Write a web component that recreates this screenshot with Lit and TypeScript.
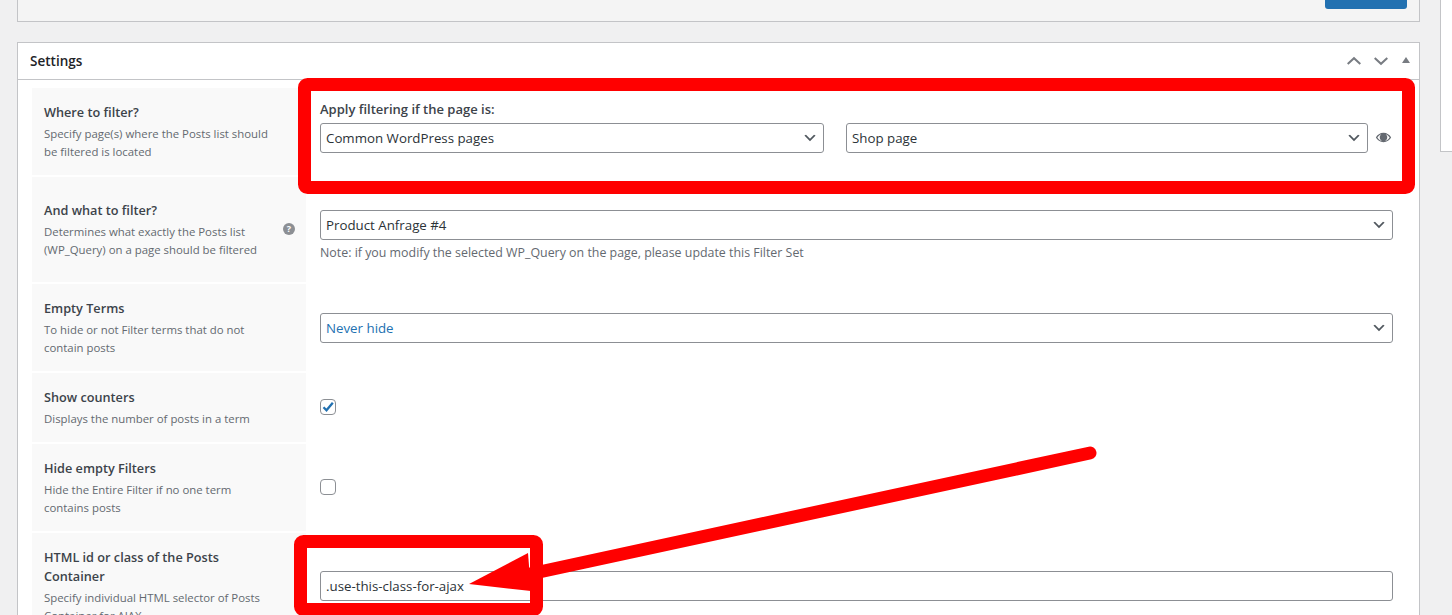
import { LitElement, html, css, svg } from "lit";
import { customElement } from "lit/decorators.js";

const chevron = html`<svg class="chev" viewBox="0 0 20 20" width="16" height="16"><path d="M5 6l5 5 5-5 2 1-7 7-7-7 2-1z" fill="#50575e"/></svg>`;

@customElement("app-root")
export class AppRoot extends LitElement {
  static styles = css`
    :host { display: block; position: relative; width: 1452px; height: 615px; overflow: hidden; background: #f0f0f1; font-family: "Open Sans", "Noto Sans", sans-serif; color: #3c434a; font-size: 13px; }
    * { box-sizing: border-box; }
    .page { display: flex; align-items: flex-start; padding-left: 17px; }
    .main { width: 1403px; flex: none; display: flex; flex-direction: column; gap: 20px; }
    .side { margin-left: 20px; width: 40px; height: 152px; background: #fff; border: 1px solid #c3c4c7; border-top: 0; border-right: 0; flex: none; }
    .top { height: 22px; background: #f4f4f4; border: 1px solid #c3c4c7; border-top: 0; display: flex; justify-content: flex-end; padding-right: 12px; }
    .publish { width: 82px; height: 9px; background: #2271b1; border-radius: 0 0 3px 3px; }
    .panel { background: #fff; border: 1px solid #c3c4c7; border-bottom: 0; }
    .head { height: 37px; border-bottom: 1px solid #c3c4c7; display: flex; align-items: center; padding: 0 8px 0 12px; }
    .head h2 { margin: 0; flex: 1; font-size: 13.500px; font-weight: 600; color: #1d2327; }
    .head-icons { display: flex; align-items: center; gap: 13px; }
    .head-icons svg { display: block; }
    .body { display: grid; grid-template-columns: 274px 1fr; row-gap: 2px; padding: 8px 26px 0 14px; }
    .th { background: #f9f9f9; padding: 15px 32px 14px 12px; position: relative; display: flex; flex-direction: column; justify-content: center; }
    .th h3 { margin: 0 0 3px; font-size: 12.700px; line-height: 19px; font-weight: 600; color: #3c434a; }
    .th p { margin: 0; font-size: 11.400px; line-height: 18px; color: #646970; }
    .help { position: absolute; right: 11px; top: 46px; width: 12px; height: 12px; }
    .td { padding-left: 14px; display: flex; flex-direction: column; justify-content: center; }
    .td.first { justify-content: flex-start; padding-top: 12px; gap: 5px; }
    .td.noted { padding-top: 33px; padding-bottom: 20px; justify-content: flex-start; gap: 4px; }
    .label { font-size: 13px; line-height: 18px; font-weight: 600; color: #3c434a; }
    .selects { display: flex; align-items: center; }
    .field { height: 30px; flex: none; border: 1px solid #8c8f94; border-radius: 3px; background: #fff; display: flex; align-items: center; justify-content: space-between; padding: 0 5px; font-size: 13.300px; color: #2c3338; }
    .field.a { width: 504px; margin-right: 22px; }
    .field.b { width: 522px; margin-right: 7px; }
    .field.blue { color: #2271b1; }
    .chev { flex: none; }
    .eye { display: block; flex: none; margin-top: -2px; }
    .note { font-size: 12.400px; line-height: 18px; color: #646970; }
    .check { width: 16px; height: 16px; margin-top: -1px; border: 1px solid #8c8f94; border-radius: 4px; background: #fff; display: block; }
    .check svg { display: block; margin: -1px; }
    .marks { position: absolute; left: 0; top: 0; pointer-events: none; }
  `;

  row(title: unknown, desc: unknown, cell: unknown, cls = "", help = false) {
    return html`
      <div class="th"><h3>${title}</h3><p>${desc}</p>${help ? html`<svg class="help" viewBox="0 0 12 12"><circle cx="6" cy="6" r="6" fill="#8c8f94"/><text x="6" y="9.200" text-anchor="middle" font-size="9" font-weight="700" fill="#fff" font-family="'Open Sans', sans-serif">?</text></svg>` : ""}</div>
      <div class="td ${cls}">${cell}</div>`;
  }

  render() {
    return html`
      <div class="page">
        <div class="main">
          <div class="top"><div class="publish"></div></div>
          <section class="panel">
            <div class="head">
              <h2>Settings</h2>
              <div class="head-icons">
                <svg width="14" height="16" viewBox="0 0 14 16"><path d="M.7 11 7 5.200 13.300 11" fill="none" stroke="#787c82" stroke-width="2"/></svg>
                <svg width="14" height="16" viewBox="0 0 14 16"><path d="M.7 5 7 10.800 13.300 5" fill="none" stroke="#787c82" stroke-width="2"/></svg>
                <svg width="10" height="16" viewBox="0 0 10 16"><path d="M1 10 5 4l4 6z" fill="#787c82"/></svg>
              </div>
            </div>
            <div class="body">
              ${this.row("Where to filter?", "Specify page(s) where the Posts list should be filtered is located", html`
                <div class="label">Apply filtering if the page is:</div>
                <div class="selects">
                  <div class="field a">Common WordPress pages ${chevron}</div>
                  <div class="field b">Shop page ${chevron}</div>
                  <svg class="eye" width="17" height="17" viewBox="0 0 20 20"><path d="M10 4.500C6 4.500 2.700 7 1 10c1.700 3 5 5.500 9 5.500s7.300-2.500 9-5.500c-1.700-3-5-5.500-9-5.500zm0 9.800c-3 0-5.600-1.700-7.200-4.300C4 8.100 5.600 6.800 7.500 6.100a4.500 4.500 0 1 0 5 0c1.900.7 3.500 2 4.700 3.900-1.600 2.600-4.200 4.300-7.200 4.300z" fill="#646970"/><circle cx="10" cy="9.500" r="3.500" fill="#646970"/></svg>
                </div>`, "first")}
              ${this.row("And what to filter?", "Determines what exactly the Posts list (WP_Query) on a page should be filtered", html`
                <div class="field">Product Anfrage #4 ${chevron}</div>
                <div class="note">Note: if you modify the selected WP_Query on the page, please update this Filter Set</div>`, "noted", true)}
              ${this.row("Empty Terms", "To hide or not Filter terms that do not contain posts", html`
                <div class="field blue">Never hide ${chevron}</div>`)}
              ${this.row("Show counters", "Displays the number of posts in a term", html`
                <div class="check"><svg width="16" height="16" viewBox="0 0 16 16"><path d="M3.500 8.200 6.500 11.200 12.800 3.800" fill="none" stroke="#2271b1" stroke-width="2.300"/></svg></div>`)}
              ${this.row("Hide empty Filters", "Hide the Entire Filter if no one term contains posts", html`<div class="check"></div>`)}
              ${this.row("HTML id or class of the Posts Container", "Specify individual HTML selector of Posts Container for AJAX", html`
                <div class="field">.use-this-class-for-ajax</div>`)}
            </div>
          </section>
        </div>
        <div class="side"></div>
      </div>
      <svg class="marks" width="1452" height="615" viewBox="0 0 1452 615">
        ${svg`
          <rect x="304.500" y="84.500" width="1104" height="103" rx="3" fill="none" stroke="#f00" stroke-width="13"/>
          <rect x="300.500" y="541.500" width="236" height="68" rx="3" fill="none" stroke="#f00" stroke-width="13"/>
          <path d="M1090 453 530 574" fill="none" stroke="#f00" stroke-width="13" stroke-linecap="round"/>
          <path d="M469 584 528 553 531 591z" fill="#f00"/>
        `}
      </svg>`;
  }
}
